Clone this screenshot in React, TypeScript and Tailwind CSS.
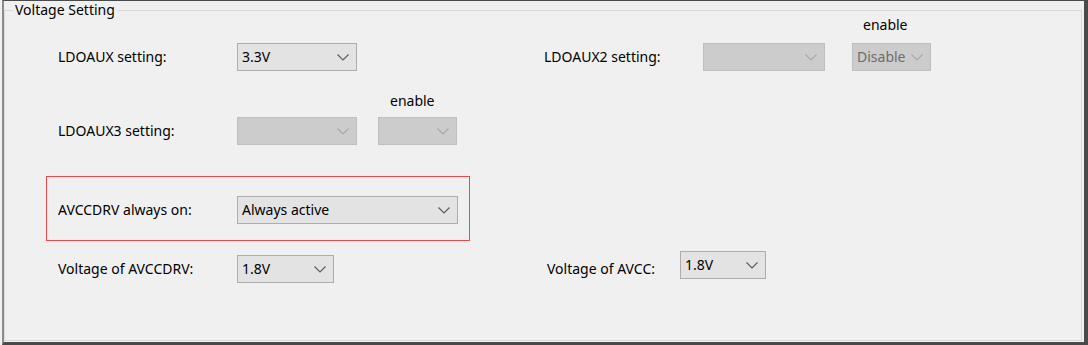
import React from 'react'

function Chevron({ disabled }: { disabled?: boolean }) {
  return (
    <svg width="12" height="7" viewBox="0 0 12 7" className="shrink-0">
      <path
        d="M0.5 0.5 L6 6 L11.5 0.5"
        fill="none"
        stroke={disabled ? '#a8a8a8' : '#5a5a5a'}
        strokeWidth="1.1"
      />
    </svg>
  )
}

function Combo({ value, width, disabled }: { value?: string; width: string; disabled?: boolean }) {
  return (
    <div
      className={`${width} ${
        disabled ? 'bg-[#cccccc] border-[#bfbfbf] text-[#6d6d6d]' : 'bg-[#e3e3e3] border-[#adadad] text-black'
      } h-[28px] shrink-0 border flex flex-row items-center justify-between pl-[4px] pr-[7px]`}
    >
      <span className="leading-[16px]">{value}</span>
      <Chevron disabled={disabled} />
    </div>
  )
}

function Label({ text, width }: { text: string; width: string }) {
  return <div className={`${width} shrink-0 h-[28px] flex items-center leading-[16px]`}>{text}</div>
}

export default function App() {
  return (
    <div
      className="w-[1088px] h-[345px] bg-[#f0f0f0] pl-[2px] text-[14px] text-black"
      style={{ fontFamily: '"Noto Sans", "Segoe UI", sans-serif' }}
    >
      <div className="h-full border-t border-l-2 border-r-4 border-b-[3px] border-[#4a4a4a] border-l-[#8c8c8c] pt-[1px] pr-[2px]">
        <fieldset className="h-[339px] border border-[#d9d9d9] min-w-0">
          <legend className="ml-[8px] px-[2px] leading-[16px]">Voltage Setting</legend>

          {/* row 1 */}
          <div className="flex flex-row items-end h-[53px] pl-[53px]">
            <Label text="LDOAUX setting:" width="w-[179px]" />
            <Combo value="3.3V" width="w-[120px]" />
            <div className="ml-[187px]">
              <Label text="LDOAUX2 setting:" width="w-[159px]" />
            </div>
            <Combo width="w-[122px]" disabled />
            <div className="ml-[27px] flex flex-col">
              <span className="pl-[11px] leading-[16px] mb-[10px]">enable</span>
              <Combo value="Disable" width="w-[79px]" disabled />
            </div>
          </div>

          {/* row 2 */}
          <div className="flex flex-row items-end mt-[22px] pl-[53px]">
            <Label text="LDOAUX3 setting:" width="w-[179px]" />
            <Combo width="w-[120px]" disabled />
            <div className="ml-[21px] flex flex-col">
              <span className="pl-[12px] leading-[16px] mb-[8px]">enable</span>
              <Combo width="w-[79px]" disabled />
            </div>
          </div>

          {/* highlighted row */}
          <div className="ml-[41px] mt-[31px] w-[424px] h-[65px] border border-[#f04848] flex flex-row items-center pl-[11px] pt-[3px]">
            <Label text="AVCCDRV always on:" width="w-[179px]" />
            <Combo value="Always active" width="w-[221px]" />
          </div>

          {/* row 4 */}
          <div className="flex flex-row items-start mt-[10px] pl-[53px]">
            <div className="flex flex-row mt-[4px]">
              <Label text="Voltage of AVCCDRV:" width="w-[179px]" />
              <Combo value="1.8V" width="w-[97px]" />
            </div>
            <div className="ml-[213px] mt-[4px]">
              <Label text="Voltage of AVCC:" width="w-[133px]" />
            </div>
            <Combo value="1.8V" width="w-[86px]" />
          </div>
        </fieldset>
      </div>
    </div>
  )
}
